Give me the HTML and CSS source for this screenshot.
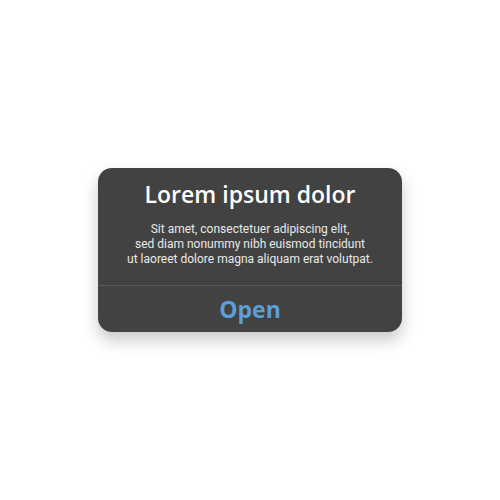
FILE: index.html
```html
<!DOCTYPE html>
<html>
<head>
<meta charset="utf-8">
<link rel="stylesheet" href="styles.css">
</head>
<body>
<div class="stage">
  <div class="alert">
    <div class="content">
      <h1 class="title">Lorem ipsum dolor</h1>
      <p class="message">Sit amet, consectetuer adipiscing elit,<br>sed diam nonummy nibh euismod tincidunt<br>ut laoreet dolore magna aliquam erat volutpat.</p>
    </div>
    <div class="actions">
      <span class="action">Open</span>
    </div>
  </div>
</div>
</body>
</html>
```
FILE: styles.css
```css
html, body {
  margin: 0;
  padding: 0;
  background: #ffffff;
}
.stage {
  width: 500px;
  height: 500px;
  display: flex;
  align-items: center;
  justify-content: center;
  font-family: Roboto, "Noto Sans", sans-serif;
}
.alert {
  width: 304px;
  height: 164px;
  background: #424242;
  border-radius: 14px;
  box-shadow: 0 8px 16px rgba(0, 0, 0, 0.22);
  display: flex;
  flex-direction: column;
  overflow: hidden;
}
.content {
  height: 118px;
  box-sizing: border-box;
  padding-top: 11px;
  text-align: center;
  border-bottom: 1px solid #5a5a5a;
}
.title {
  margin: 0;
  font-family: "Open Sans", sans-serif;
  font-size: 23px;
  font-weight: 600;
  color: #ffffff;
  line-height: 30px;
}
.message {
  margin: 13px 0 0;
  font-size: 12px;
  line-height: 15px;
  color: #e8e8e8;
}
.actions {
  flex: 1;
  display: flex;
  align-items: center;
  justify-content: center;
}
.action {
  font-family: "Open Sans", sans-serif;
  font-size: 23px;
  font-weight: 700;
  color: #5b9fd8;
}
```
